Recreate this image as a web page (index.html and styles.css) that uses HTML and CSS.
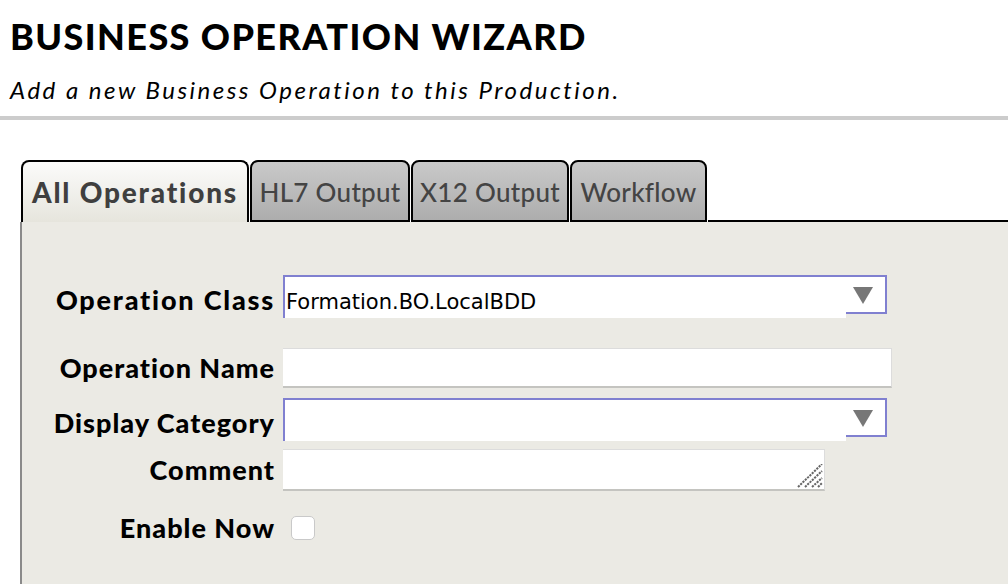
FILE: index.html
```html
<!DOCTYPE html>
<html>
<head>
<meta charset="utf-8">
<link rel="stylesheet" href="styles.css">
</head>
<body>
<header class="header">
  <h1 class="title">BUSINESS OPERATION WIZARD</h1>
  <p class="subtitle">Add a new Business Operation to this Production.</p>
</header>
<div class="rule"></div>
<main class="wizard">
  <nav class="tabs">
    <div class="tab active">All Operations</div>
    <div class="tab tab-hl7">HL7 Output</div>
    <div class="tab tab-x12">X12 Output</div>
    <div class="tab tab-wf">Workflow</div>
    <div class="tab-fill"></div>
  </nav>
  <section class="panel">
    <div class="row row-select first">
      <label class="label label-select">Operation Class</label>
      <div class="select">
        <div class="select-value">Formation.BO.LocalBDD</div>
        <div class="select-arrow"><span class="tri"></span></div>
      </div>
    </div>
    <div class="row row-input">
      <label class="label">Operation Name</label>
      <div class="input"></div>
    </div>
    <div class="row row-select">
      <label class="label label-select">Display Category</label>
      <div class="select">
        <div class="select-value"></div>
        <div class="select-arrow"><span class="tri"></span></div>
      </div>
    </div>
    <div class="row row-textarea">
      <label class="label">Comment</label>
      <div class="textarea">
        <svg class="grip" width="26" height="24" viewBox="0 0 26 24">
          <path d="M1 23 L25 0 M8 23 L25 7 M15 23 L25 14 M21 23 L25 19" stroke="#666" stroke-width="2" stroke-dasharray="2.2 1" fill="none"/>
        </svg>
      </div>
    </div>
    <div class="row row-check">
      <label class="label">Enable Now</label>
      <div class="checkbox"></div>
    </div>
  </section>
</main>
</body>
</html>
```
FILE: styles.css
```css
html, body {
  margin: 0;
  padding: 0;
  background: #fff;
  height: 100%;
  overflow: hidden;
}
body {
  font-family: "Lato", "DejaVu Sans", sans-serif;
  color: #000;
}
.header {
  padding: 18px 0 0 10px;
  height: 98px;
  box-sizing: border-box;
}
.title {
  margin: 0;
  font-size: 36px;
  line-height: 36px;
  font-weight: 900;
  letter-spacing: 1.4px;
}
.subtitle {
  margin: 23px 0 0 0;
  font-size: 24px;
  line-height: 26px;
  font-style: italic;
  font-weight: 400;
  letter-spacing: 2.5px;
}
.rule {
  height: 4px;
  background: #cccccc;
  margin-top: 18px;
}
.wizard {
  padding: 40px 0 0 20px;
}
.tabs {
  display: flex;
  align-items: flex-end;
  height: 62px;
  padding-left: 1px;
}
.tab {
  box-sizing: border-box;
  height: 62px;
  border: 2px solid #000;
  border-radius: 8px 8px 0 0;
  background: linear-gradient(#c9c9c9, #adadad);
  color: #444;
  font-size: 26px;
  font-weight: 500;
  line-height: 60px;
  letter-spacing: 0.3px;
  text-align: center;
  margin-right: 1px;
  white-space: nowrap;
}
.tab-hl7 { width: 160px; }
.tab-x12 { width: 158px; }
.tab-wf { width: 137px; }
.tab.active {
  border-bottom: none;
  background: linear-gradient(#fbfbfa, #e6e5dd);
  font-weight: 900;
  font-size: 28px;
  letter-spacing: 1.8px;
  width: 228px;
  color: #3f3f3f;
}
.tab-fill {
  flex: 1;
  height: 62px;
  border-bottom: 2px solid #000;
  box-sizing: border-box;
}
.panel {
  background: #ebeae4;
  border-left: 2px solid #8a8a8a;
  height: 362px;
  padding-top: 53px;
  box-sizing: border-box;
}
.row {
  display: flex;
  align-items: center;
}
.label {
  width: 253px;
  text-align: right;
  font-size: 27px;
  font-weight: 900;
  letter-spacing: 1px;
  margin-right: 8px;
  line-height: 30px;
  white-space: nowrap;
}
.label-select {
  padding-top: 6px;
}
.select .select-value {
  white-space: nowrap;
}
.first .label {
  letter-spacing: 1.8px;
}
.select {
  width: 604px;
  height: 43px;
  display: flex;
  box-sizing: border-box;
}
.select-value {
  flex: 1;
  background: #fff;
  border-top: 2px solid #8080d0;
  border-left: 2px solid #8080d0;
  box-sizing: border-box;
  height: 43px;
  font-family: "DejaVu Sans", "Liberation Sans", sans-serif;
  font-size: 21px;
  line-height: 21px;
  padding: 15px 0 0 1px;
}
.select-arrow {
  width: 41px;
  height: 39px;
  box-sizing: border-box;
  background: #fff;
  border: 2px solid #8080d0;
  border-left: none;
  display: flex;
  justify-content: flex-start;
  padding: 10px 0 0 7px;
}
.tri {
  width: 0;
  height: 0;
  border-left: 10px solid transparent;
  border-right: 10px solid transparent;
  border-top: 17px solid #777;
}
.row-input {
  margin-top: 30px;
}
.input {
  width: 609px;
  height: 40px;
  box-sizing: border-box;
  background: #fff;
  border-top: 1px solid #dcdcdc;
  border-right: 1px solid #dcdcdc;
  border-bottom: 2px solid #c4c4c0;
}
.row-input + .row-select {
  margin-top: 10px;
}
.row-textarea {
  margin-top: 8px;
}
.textarea {
  width: 542px;
  height: 42px;
  box-sizing: border-box;
  background: #fff;
  border-top: 1px solid #dcdcdc;
  border-right: 1px solid #dcdcdc;
  border-bottom: 2px solid #c4c4c0;
  display: flex;
  justify-content: flex-end;
  align-items: flex-end;
  padding: 0 1px 1px 0;
}
.grip {
  display: block;
}
.row-check {
  margin-top: 22px;
}
.checkbox {
  width: 24px;
  height: 24px;
  box-sizing: border-box;
  border: 1px solid #c9c9c9;
  border-radius: 5px;
  background: #fff;
  margin-left: 8px;
}
```
